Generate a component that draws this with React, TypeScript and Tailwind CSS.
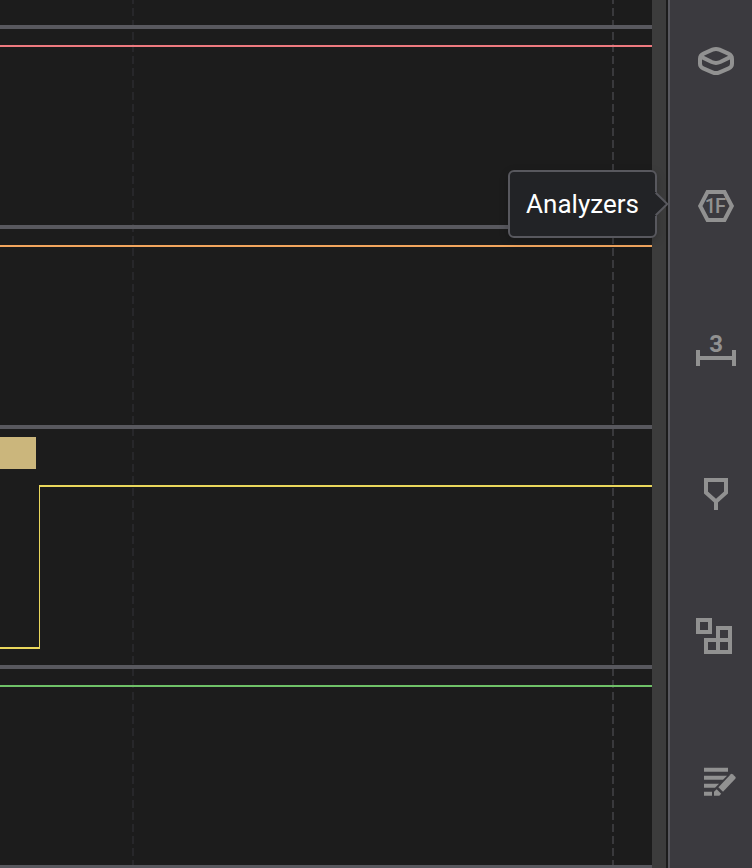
import type { ReactNode } from "react";

function Icon({ children }: { children: ReactNode }) {
  return (
    <svg
      width="40"
      height="40"
      viewBox="0 0 40 40"
      fill="none"
      stroke="#919191"
      strokeWidth="4"
      className="block shrink-0 overflow-visible"
    >
      {children}
    </svg>
  );
}

function Channel({ size, children }: { size: string; children?: ReactNode }) {
  return (
    <div className={`w-full shrink-0 border-b-4 border-[#58585e] ${size}`}>
      {children}
    </div>
  );
}

function GridLines() {
  return (
    <svg width="652" height="868" className="absolute top-0 left-0">
      <path d="M133 -4V868" stroke="#27272a" strokeWidth="2" strokeDasharray="8 4" />
      <path d="M613 -4V868" stroke="#39393c" strokeWidth="2" strokeDasharray="8 4" />
    </svg>
  );
}

function Tooltip() {
  return (
    <div className="absolute top-[170px] left-[508px] flex h-[68px] w-[149px] items-center justify-center rounded-[6px] border-2 border-[#58585e] bg-[#222326] shadow-[0_3px_10px_rgba(0,0,0,0.2)]">
      <span className="text-[26px] leading-8 text-white">Analyzers</span>
      <svg width="14" height="24" className="absolute top-[20px] left-[145px]">
        <path d="M0 0H1L13 12L1 24H0Z" fill="#222326" />
        <path d="M0.7 0.7L12.3 12L0.7 23.3" fill="none" stroke="#58585e" strokeWidth="2" />
      </svg>
    </div>
  );
}

export default function App() {
  return (
    <div className="relative flex h-[868px] w-[752px] overflow-hidden bg-[#1c1c1c] font-['Roboto',sans-serif]">
      <main className="relative w-[652px] shrink-0 overflow-hidden">
        <GridLines />
        <div className="relative flex flex-col">
          <Channel size="h-[29px]" />
          <Channel size="h-[200px] pt-4">
            <div className="h-0.5 bg-[#ee7a7f]" />
          </Channel>
          <Channel size="h-[200px] pt-4">
            <div className="h-0.5 bg-[#f2a65e]" />
          </Channel>
          <Channel size="h-[240px] pt-2">
            <div className="h-8 w-9 bg-[#cbb67c]" />
            <svg width="652" height="164" className="mt-4 block" fill="#ead75c">
              <rect x="39" y="0" width="613" height="2" />
              <rect x="39" y="0" width="1" height="164" />
              <rect x="0" y="162" width="40" height="2" />
            </svg>
          </Channel>
          <Channel size="h-[200px] pt-4">
            <div className="h-0.5 bg-[#6fc168]" />
          </Channel>
        </div>
      </main>
      <div className="w-[14px] shrink-0 bg-[#3c3c3c]" />
      <aside className="ml-0.5 flex flex-1 flex-col gap-[104px] border-l-2 border-[#58585e] bg-[#3b3a3f] pt-[42px] pl-[26px]">
        <Icon>
          <path d="M16.5 7.7Q20 6.2 23.5 7.7L32.4 11.6Q36 13.2 36 17V21.8Q36 25 32.8 26.4L23.5 30.3Q20 31.7 16.5 30.3L7.2 26.4Q4 25 4 21.8V17Q4 13.2 7.6 11.6Z" />
          <path d="M4.8 14.6L15.8 20Q20 21.8 24.2 20L35.2 14.6" />
        </Icon>
        <Icon>
          <path d="M11.5 6H28.5L35.8 20L28.5 34H11.5L4.2 20Z" />
          <text x="18.9" y="27" textAnchor="middle" fill="#919191" stroke="none" className="text-[20px] font-medium tracking-[-1px]">1F</text>
        </Icon>
        <Icon>
          <path d="M2 20V36M38 20V36M2 28H38" />
          <text x="20.2" y="21.5" textAnchor="middle" fill="#919191" stroke="none" className="text-[24px] font-bold">3</text>
        </Icon>
        <Icon>
          <path d="M10 6H30V18.5L20 27.5L10 18.5ZM20 27V36" />
        </Icon>
        <Icon>
          <path d="M2 2H14V14H2ZM22 10H34V22H22ZM10 22H22V34H10ZM22 22H34V34H22Z" />
        </Icon>
        <Icon>
          <g fill="#919191" stroke="none">
            <path d="M8 5.7H32V9.7H8ZM8 13.7H31L27 17.7H8ZM8 21.7H23L19 25.7H8ZM8 29.7H16V33.7H8Z" />
            <path d="M22.4 25.2L34.8 12.2Q35.7 11.4 36.6 12.2L39.3 14.8Q40.2 15.8 39.3 16.8L27 29.8Z" />
            <path d="M20.7 27.2L25.2 31.8L23.3 33.8H18V29.8Z" />
          </g>
        </Icon>
      </aside>
      <Tooltip />
    </div>
  );
}
